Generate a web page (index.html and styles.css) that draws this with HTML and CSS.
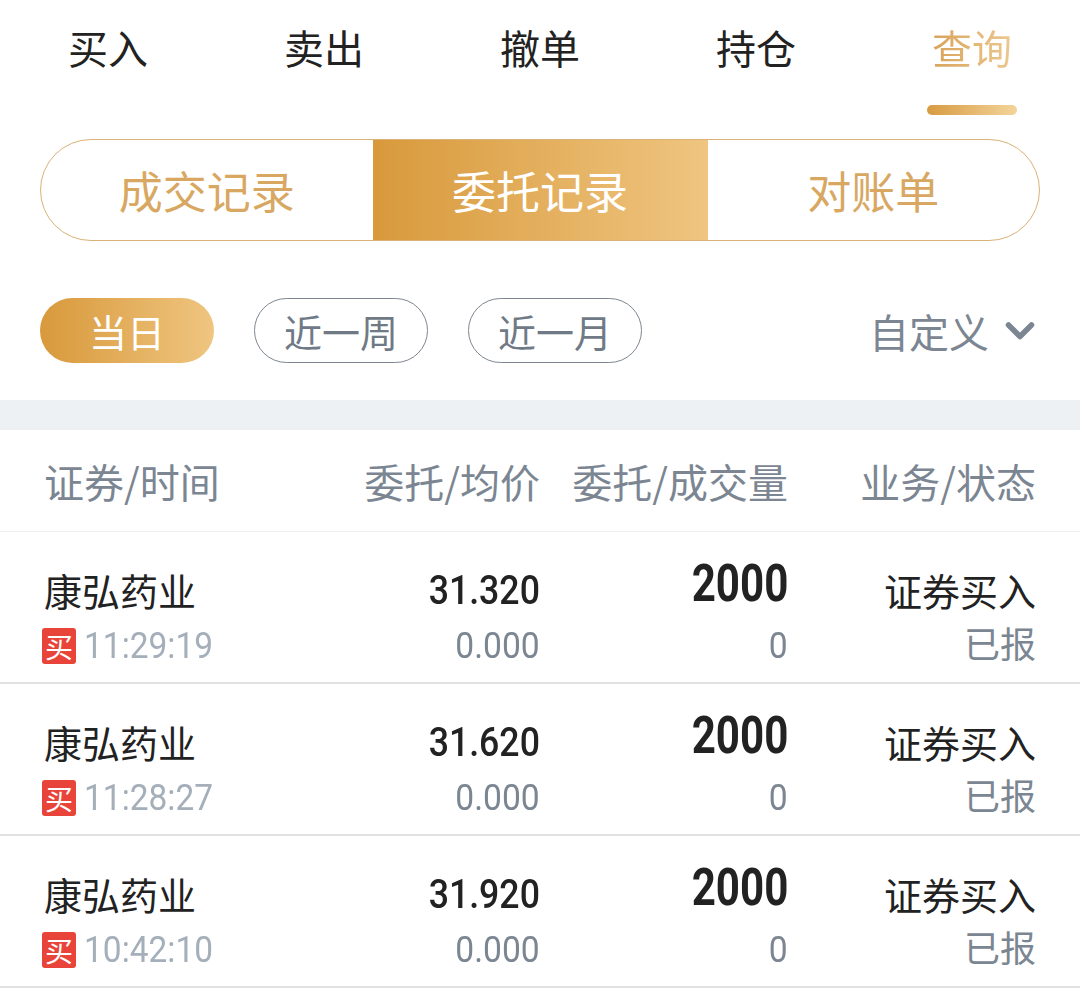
FILE: index.html
```html
<!DOCTYPE html>
<html lang="zh-CN">
<head>
<meta charset="utf-8">
<link rel="stylesheet" href="styles.css">
</head>
<body>
<div class="page">
  <nav class="tabs">
    <div class="tab"><span class="tab-text">买入</span></div>
    <div class="tab"><span class="tab-text">卖出</span></div>
    <div class="tab"><span class="tab-text">撤单</span></div>
    <div class="tab"><span class="tab-text">持仓</span></div>
    <div class="tab active"><span class="tab-text">查询</span><span class="tab-bar"></span></div>
  </nav>

  <div class="segment">
    <div class="seg">成交记录</div>
    <div class="seg active">委托记录</div>
    <div class="seg">对账单</div>
  </div>

  <div class="filters">
    <div class="pill active">当日</div>
    <div class="pill">近一周</div>
    <div class="pill">近一月</div>
    <div class="custom">自定义
      <svg class="chev" width="30" height="20" viewBox="0 0 30 20"><path d="M3.5 4 L15 15.5 L26.5 4" fill="none" stroke="#7b8692" stroke-width="5.5" stroke-linecap="round" stroke-linejoin="round"/></svg>
    </div>
  </div>

  <div class="band"></div>

  <div class="grid head">
    <div class="c1">证券/时间</div>
    <div class="cr">委托/均价</div>
    <div class="cr">委托/成交量</div>
    <div class="cr">业务/状态</div>
  </div>

  <div class="grid row">
    <div class="c1">
      <div class="l1 name">康弘药业</div>
      <div class="l2 time"><span class="badge">买</span><span class="tnum">11:29:19</span></div>
    </div>
    <div class="cr">
      <div class="l1"><span class="num">31.320</span></div>
      <div class="l2"><span class="sub">0.000</span></div>
    </div>
    <div class="cr">
      <div class="l1"><span class="qty">2000</span></div>
      <div class="l2"><span class="sub">0</span></div>
    </div>
    <div class="cr">
      <div class="l1 name">证券买入</div>
      <div class="l2 status">已报</div>
    </div>
  </div>

  <div class="grid row">
    <div class="c1">
      <div class="l1 name">康弘药业</div>
      <div class="l2 time"><span class="badge">买</span><span class="tnum">11:28:27</span></div>
    </div>
    <div class="cr">
      <div class="l1"><span class="num">31.620</span></div>
      <div class="l2"><span class="sub">0.000</span></div>
    </div>
    <div class="cr">
      <div class="l1"><span class="qty">2000</span></div>
      <div class="l2"><span class="sub">0</span></div>
    </div>
    <div class="cr">
      <div class="l1 name">证券买入</div>
      <div class="l2 status">已报</div>
    </div>
  </div>

  <div class="grid row">
    <div class="c1">
      <div class="l1 name">康弘药业</div>
      <div class="l2 time"><span class="badge">买</span><span class="tnum">10:42:10</span></div>
    </div>
    <div class="cr">
      <div class="l1"><span class="num">31.920</span></div>
      <div class="l2"><span class="sub">0.000</span></div>
    </div>
    <div class="cr">
      <div class="l1"><span class="qty">2000</span></div>
      <div class="l2"><span class="sub">0</span></div>
    </div>
    <div class="cr">
      <div class="l1 name">证券买入</div>
      <div class="l2 status">已报</div>
    </div>
  </div>
</div>
</body>
</html>
```

FILE: styles.css
```css
* { box-sizing: border-box; }
html, body { margin: 0; padding: 0; background: #fff; }
body {
  font-family: "Noto Sans CJK SC", "Noto Sans", sans-serif;
  color: #222;
}
.page { width: 1080px; height: 1003px; overflow: hidden; background: #fff; }

.tabs {
  display: grid;
  grid-template-columns: repeat(5, 216px);
  height: 139px;
}
.tab {
  display: flex;
  flex-direction: column;
  align-items: center;
  padding-top: 25px;
}
.tab-text {
  font-size: 40px;
  line-height: 44px;
  color: #222;
}
.tab.active .tab-text {
  background: linear-gradient(90deg, #d9a35b, #ecc88f);
  -webkit-background-clip: text;
  background-clip: text;
  color: transparent;
}
.tab-bar {
  margin-top: 36px;
  width: 90px;
  height: 10px;
  border-radius: 5px;
  background: linear-gradient(90deg, #d89b42, #f3d49b);
}

.segment {
  display: flex;
  margin: 0 40px;
  height: 102px;
  border: 1.5px solid #d9b277;
  border-radius: 51px;
  overflow: hidden;
}
.seg {
  flex: 1;
  display: flex;
  align-items: center;
  justify-content: center;
  font-size: 44px;
  color: #d8a862;
}
.seg:nth-child(2) { flex: 0 0 335px; }
.seg.active {
  background: linear-gradient(90deg, #d8993b, #efc580);
  color: #fff;
}

.filters {
  display: flex;
  align-items: center;
  gap: 40px;
  margin-top: 57px;
  padding: 0 45px 0 40px;
  height: 65px;
}
.pill {
  width: 174px;
  height: 65px;
  border: 1.5px solid #7d8690;
  border-radius: 33px;
  display: flex;
  align-items: center;
  justify-content: center;
  font-size: 38px;
  color: #6f7a86;
}
.pill.active {
  border: none;
  background: linear-gradient(90deg, #d8993b, #efc580);
  color: #fff;
}
.custom {
  margin-left: auto;
  display: flex;
  align-items: center;
  gap: 16px;
  font-size: 40px;
  color: #7b8692;
}
.chev { display: block; }

.band {
  margin-top: 37px;
  height: 30px;
  background: #eef1f4;
}

.grid {
  display: grid;
  grid-template-columns: repeat(4, 248px);
  padding: 0 44px;
}
.c1 { text-align: left; }
.cr { text-align: right; }

.head {
  height: 102px;
  align-items: center;
  font-size: 40px;
  color: #7b8692;
  border-bottom: 1.5px solid #eeeeee;
}

.row {
  height: 152px;
  padding-top: 30px;
  border-bottom: 2px solid #e2e2e2;
}
.l1, .l2 {
  height: 56px;
  line-height: 56px;
  white-space: nowrap;
}
.name { font-size: 38px; color: #222; }

.num, .sub, .qty, .tnum {
  display: inline-block;
  font-family: Roboto, "Noto Sans", sans-serif;
  transform-origin: right center;
}
.num {
  font-size: 41px;
  font-weight: 500;
  color: #222;
  transform: scaleX(0.87);
}
.sub {
  font-size: 36.5px;
  font-weight: 400;
  color: #7b8692;
  transform: scaleX(0.92);
}
.qty {
  font-size: 52px;
  font-weight: 700;
  color: #222;
  line-height: 44px;
  transform: scaleX(0.81);
}
.status { font-size: 36px; color: #7b8692; line-height: 48px; }
.time {
  display: flex;
  align-items: center;
  gap: 8px;
  margin-left: -2px;
}
.tnum {
  font-size: 36px;
  color: #a4afba;
  transform-origin: left center;
  transform: scaleX(0.93);
}
.badge {
  display: inline-flex;
  align-items: center;
  justify-content: center;
  width: 34px;
  height: 36px;
  border-radius: 3px;
  background: #e8443a;
  color: #fff;
  font-size: 28px;
  line-height: 1;
}
```
